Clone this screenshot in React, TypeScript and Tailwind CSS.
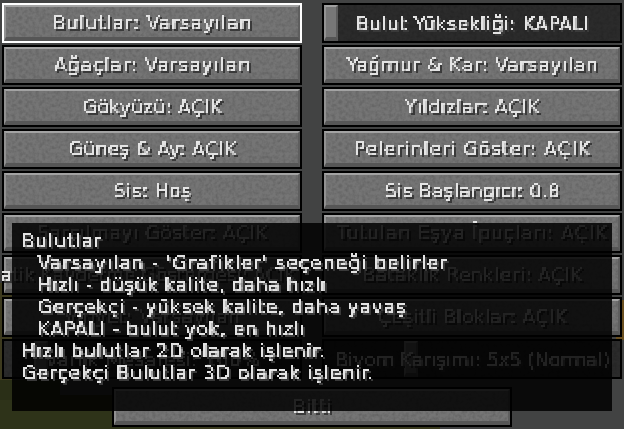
import React from 'react';

type Row = { label: string; kind?: 'button' | 'selected' | 'slider'; handle?: number; end?: boolean; tr?: string };

const rows: Row[] = [
  { label: 'Bulutlar: Varsayılan', kind: 'selected', tr: 'tracking-[0.75px]' },
  { label: 'Bulut Yüksekliği: KAPALI', kind: 'slider', handle: 0, tr: 'tracking-[0.3px]' },
  { label: 'Ağaçlar: Varsayılan', tr: 'tracking-[0.8px]' },
  { label: 'Yağmur & Kar: Varsayılan', tr: 'tracking-[0.5px]' },
  { label: 'Gökyüzü: AÇIK', tr: 'tracking-[0.1px]' },
  { label: 'Yıldızlar: AÇIK', tr: 'tracking-[0.3px]' },
  { label: 'Güneş & Ay: AÇIK', tr: 'tracking-[0.2px]' },
  { label: 'Pelerinleri Göster: AÇIK', tr: 'tracking-[0.7px]' },
  { label: 'Sis: Hoş', tr: 'tracking-[0.3px]' },
  { label: 'Sis Başlangıcı: 0.8', tr: 'tracking-[0.15px]' },
  { label: 'Sarsılmayı Göster: AÇIK', tr: 'tracking-[0.3px]' },
  { label: 'Tutulan Eşya İpuçları: AÇIK', tr: 'tracking-[0.67px]' },
  { label: 'Otomatik Kaydetme Göstergesi: AÇIK', end: true, tr: 'tracking-[-0.2px]' },
  { label: 'Bataklık Renkleri: AÇIK', tr: 'tracking-[0.2px]' },
  { label: 'Vinyet: Varsayılan', tr: 'tracking-[0.3px]' },
  { label: 'Çeşitli Bloklar: AÇIK', tr: 'tracking-[0.15px]' },
  { label: 'Varlık Mesafesi: 100%', kind: 'slider', handle: 10, tr: 'tracking-[0.3px]' },
  { label: 'Biyom Karışımı: 5x5 (Normal)', kind: 'slider', handle: 27, tr: 'tracking-[-0.15px]' },
];

const tooltip = [
  { text: 'Bulutlar', tr: 'tracking-[0.75px]' },
  { text: "Varsayılan - 'Grafikler' seçeneği belirler", indent: true, tr: 'tracking-[0.9px]' },
  { text: 'Hızlı - düşük kalite, daha hızlı', indent: true, tr: 'tracking-[0.35px]' },
  { text: 'Gerçekçi - yüksek kalite, daha yavaş', indent: true, tr: 'tracking-[0.58px]' },
  { text: 'KAPALI - bulut yok, en hızlı', indent: true, tr: 'tracking-[0.57px]' },
  { text: 'Hızlı bulutlar 2D olarak işlenir.', tr: 'tracking-[0.57px]' },
  { text: 'Gerçekçi Bulutlar 3D olarak işlenir.', tr: 'tracking-[0.67px]' },
];

const Noise = () => (
  <svg className="absolute inset-0 h-full w-full">
    <rect width="100%" height="100%" filter="url(#stone)" />
  </svg>
);

const Label = ({ children, tr = 'tracking-[0.3px]' }: { children: React.ReactNode; tr?: string }) => (
  <span
    className={`relative inline-block whitespace-nowrap text-[19px] leading-[22px] text-[#e4e4e4] [font-family:'DejaVu_Sans',sans-serif] [text-shadow:2px_2px_0_#3a3a3a] [filter:url(#mc)] ${tr}`}
  >
    {children}
  </span>
);

const McButton = ({ label, kind = 'button', handle, end, tr }: Row) => {
  if (kind === 'slider') {
    return (
      <div className="relative flex h-10 items-center justify-center border-2 border-black bg-[#2b2b2b]">
        <Noise />
        <div
          className="absolute inset-y-0 w-[14px] border-t-2 border-r-2 border-b-4 border-l-2 border-t-[#a0a0a0] border-r-[#5c5c5c] border-b-[#555555] border-l-[#939393] bg-[#777777]"
          style={{ left: `${handle}%` }}
        />
        <Label tr={tr}>{label}</Label>
      </div>
    );
  }
  return (
    <div className={`h-10 border-2 ${kind === 'selected' ? 'border-white' : 'border-black'}`}>
      <div
        className={`relative flex h-full items-center border-t-2 border-r-2 border-b-4 border-l-2 border-t-[#a3a3a3] border-r-[#5e5e5e] border-b-[#565656] border-l-[#919191] bg-[#757575] ${end ? 'justify-end pr-[2px]' : 'justify-center'}`}
      >
        <Noise />
        <Label tr={tr}>{label}</Label>
      </div>
    </div>
  );
};

export default function App() {
  return (
    <div className="relative h-[429px] w-[624px] overflow-hidden bg-[#424343]">
      {/* filters shared by the buttons and labels */}
      <svg className="absolute h-0 w-0">
        <defs>
          <filter id="stone" x="0" y="0" width="100%" height="100%">
            <feTurbulence type="fractalNoise" baseFrequency="0.3" numOctaves="2" seed="4" />
            <feColorMatrix values="0 0 0 0 0  0 0 0 0 0  0 0 0 0 0  0.3 0 0 0 -0.11" />
          </filter>
          <filter id="mc" x="0" y="0" width="100%" height="100%" colorInterpolationFilters="sRGB">
            <feFlood x="0" y="0" width="1" height="1" floodColor="#000" />
            <feComposite width="2" height="2" />
            <feTile result="grid" />
            <feComponentTransfer in="SourceGraphic" result="hard">
              <feFuncA type="discrete" tableValues="0 1 1 1" />
            </feComponentTransfer>
            <feComposite in="hard" in2="grid" operator="in" result="dots" />
            <feOffset in="dots" dx="1" result="o1" />
            <feOffset in="dots" dy="1" result="o2" />
            <feOffset in="dots" dx="1" dy="1" result="o3" />
            <feMerge>
              <feMergeNode in="dots" />
              <feMergeNode in="o1" />
              <feMergeNode in="o2" />
              <feMergeNode in="o3" />
            </feMerge>
          </filter>
        </defs>
      </svg>

      {/* world behind the menu */}
      <svg className="absolute inset-0 h-full w-full" viewBox="0 0 624 429">
        <rect x="0" y="395" width="180" height="34" fill="#2e3319" />
        <rect x="0" y="380" width="60" height="20" fill="#2a2f17" />
        <rect x="0" y="280" width="12" height="100" fill="#3d3a1e" />
        <rect x="180" y="420" width="260" height="9" fill="#3a3a1e" />
        <rect x="616" y="300" width="8" height="40" fill="#6b5020" />
      </svg>

      <div className="relative px-[2px] pt-[3px]">
        <div className="grid grid-cols-2 gap-x-5 gap-y-[2px]">
          {rows.map((row) => (
            <McButton key={row.label} {...row} />
          ))}
        </div>
        <div className="mx-auto mt-2 w-[400px]">
          <McButton label="Bitti" />
        </div>
      </div>

      <div className="absolute top-[223px] left-3 flex h-[188px] w-[600px] flex-col bg-black/85 pt-[6px] pl-[9px]">
        {tooltip.map((line) => (
          <div key={line.text} className={line.indent ? 'flex pl-[16px]' : 'flex'}>
            <Label tr={line.tr}>{line.text}</Label>
          </div>
        ))}
      </div>
    </div>
  );
}
